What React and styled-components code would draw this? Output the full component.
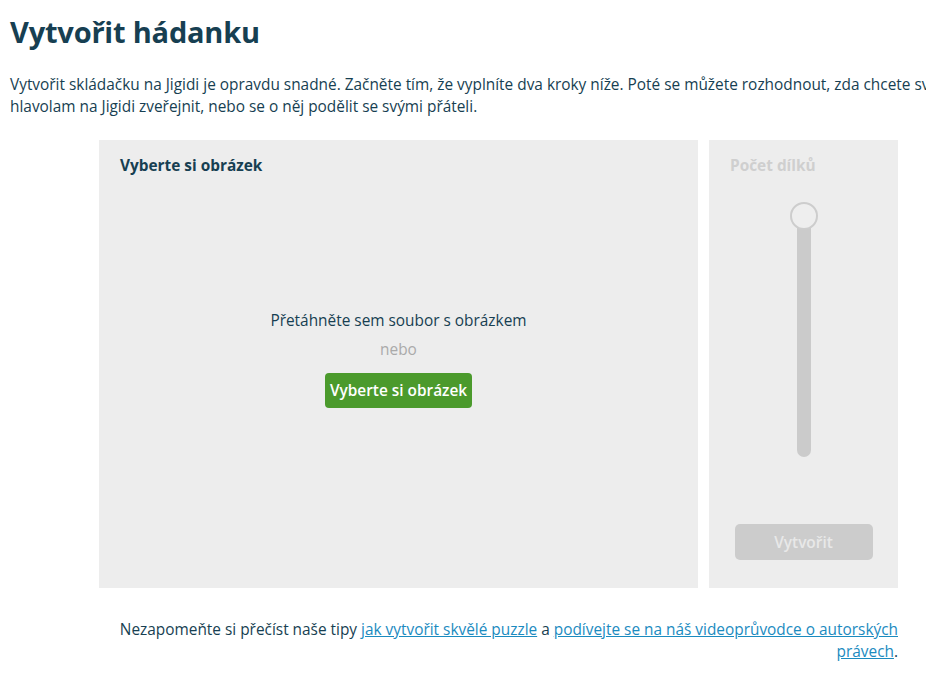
import React from "react";
import styled, { createGlobalStyle } from "styled-components";

const GlobalStyle = createGlobalStyle`
html, body {
  margin: 0;
  padding: 0;
  background: #fff;
  overflow: hidden;
}
body {
  font-family: "Open Sans", "Liberation Sans", sans-serif;
  color: #173f52;
}
`;

const Page = styled.div`
  width: 977px;
  padding: 0 10px;
`;

const Title = styled.h1`
  margin: 0;
  padding-top: 12px;
  font-size: 29px;
  line-height: 40px;
  font-weight: 700;
  letter-spacing: -0.2px;
  color: #173f52;
`;

const Intro = styled.p`
  margin: 22px 0 0;
  font-size: 15.4px;
  line-height: 22px;
`;

const Workspace = styled.div`
  width: 799px;
  margin: 22px auto 0;
`;

const Panels = styled.div`
  display: flex;
  gap: 11px;
  height: 448px;
`;

const Panel = styled.section`
  background: #ededed;
  box-sizing: border-box;
  padding: 16px 20px;
  display: flex;
  flex-direction: column;
  width: ${(p) => p.$w}px;
`;

const PanelTitle = styled.h2`
  margin: 0 0 0 1px;
  font-size: 15.4px;
  line-height: 20px;
  font-weight: 700;
  color: ${(p) => (p.$muted ? "#cfcfcf" : "#173f52")};
`;

const DropZone = styled.div`
  flex: 1;
  display: flex;
  flex-direction: column;
  align-items: center;
  justify-content: center;
  padding-bottom: 30px;
`;

const DropText = styled.div`
  font-size: 15.4px;
  line-height: 22px;
`;

const OrText = styled.div`
  font-size: 15.4px;
  line-height: 22px;
  color: #aaa;
  margin-top: 7px;
`;

const PickButton = styled.button`
  margin-top: 12px;
  height: 35px;
  padding: 0 5px;
  border: none;
  border-radius: 4px;
  background: #4b9a2c;
  color: #fff;
  font-family: inherit;
  font-size: 15.4px;
  font-weight: 600;
  cursor: pointer;
`;

const SliderArea = styled.div`
  flex: 1;
  display: flex;
  justify-content: center;
  padding-top: 26px;
`;

const Track = styled.div`
  position: relative;
  width: 14px;
  height: 241px;
  margin-top: 14px;
  border-radius: 7px;
  background: #cbcbcb;
`;

const Thumb = styled.div`
  position: absolute;
  left: 50%;
  top: -14px;
  transform: translateX(-50%);
  width: 24px;
  height: 24px;
  border-radius: 50%;
  background: #eeeeee;
  border: 2px solid #cdcdcd;
`;

const CreateButton = styled.button`
  align-self: center;
  margin-bottom: 12px;
  width: 138px;
  height: 36px;
  border: none;
  border-radius: 5px;
  background: #cccccc;
  color: #e8e8e8;
  font-family: inherit;
  font-size: 15.4px;
  font-weight: 600;
`;

const Note = styled.p`
  margin: 31px 0 0;
  text-align: right;
  font-size: 15.4px;
  line-height: 22px;
`;

const Link = styled.a`
  color: #1b8bbf;
  text-decoration: underline;
`;

export default function App() {
  return (
    <Page>
      <GlobalStyle />
      <Title>Vytvořit hádanku</Title>
      <Intro>
        Vytvořit skládačku na Jigidi je opravdu snadné. Začněte tím, že vyplníte dva kroky níže. Poté se můžete rozhodnout, zda chcete svůj
        hlavolam na Jigidi zveřejnit, nebo se o něj podělit se svými přáteli.
      </Intro>
      <Workspace>
        <Panels>
          <Panel $w={599}>
            <PanelTitle>Vyberte si obrázek</PanelTitle>
            <DropZone>
              <DropText>Přetáhněte sem soubor s obrázkem</DropText>
              <OrText>nebo</OrText>
              <PickButton>Vyberte si obrázek</PickButton>
            </DropZone>
          </Panel>
          <Panel $w={189}>
            <PanelTitle $muted>Počet dílků</PanelTitle>
            <SliderArea>
              <Track>
                <Thumb />
              </Track>
            </SliderArea>
            <CreateButton disabled>Vytvořit</CreateButton>
          </Panel>
        </Panels>
        <Note>
          Nezapomeňte si přečíst naše tipy <Link href="#">jak vytvořit skvělé puzzle</Link> a{" "}
          <Link href="#">podívejte se na náš videoprůvodce o autorských právech</Link>.
        </Note>
      </Workspace>
    </Page>
  );
}
